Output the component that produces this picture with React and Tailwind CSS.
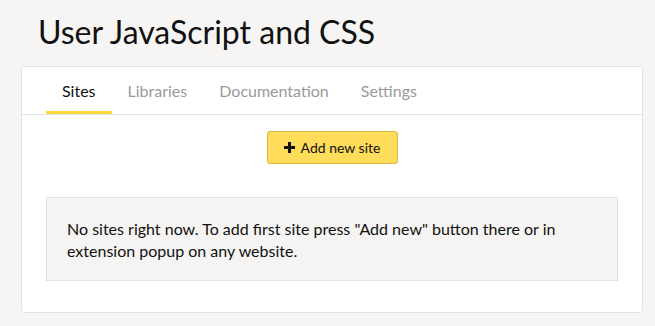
import { useState } from "react";

const tabs = ["Sites", "Libraries", "Documentation", "Settings"];

const PlusIcon = () => (
    <svg width="11" height="11" viewBox="0 0 11 11" className="shrink-0">
        <rect x="4" y="0" width="3" height="11" fill="#111" />
        <rect x="0" y="4" width="11" height="3" fill="#111" />
    </svg>
);

const App = () => {
    const [active, setActive] = useState("Sites");

    return (
        <div className="min-h-screen bg-[#f6f5f3] px-[21px] pt-[12px] pb-[13px] font-['Lato','Liberation_Sans',sans-serif] text-[#111]">
            <h1 className="pl-[17px] text-[32px] leading-[40px] font-normal">User JavaScript and CSS</h1>

            <div className="mt-[14px] w-[622px] rounded-[3px] border border-[#e2e2e2] bg-white">
                <div className="flex border-b border-[#e2e2e2] px-[24px]">
                    {tabs.map((tab) => (
                        <button
                            key={tab}
                            onClick={() => setActive(tab)}
                            className={`px-[16px] pt-[14px] pb-[10px] text-[16px] leading-[20px] border-b-[3px] ${active === tab ? "border-[#ffd83a] text-[#111]" : "border-transparent text-[#9a9a9a]"}`}
                        >
                            {tab}
                        </button>
                    ))}
                </div>

                <div className="px-[24px] pt-[16px] pb-[31px]">
                    <div className="flex justify-center">
                        <button className="flex h-[33px] w-[131px] items-center justify-center gap-[6px] rounded-[3px] border border-[#d8b63e] bg-[#ffdc5a] text-[14px]">
                            <PlusIcon />
                            Add new site
                        </button>
                    </div>

                    <div className="mt-[33px] h-[84px] border border-[#e2e2e2] bg-[#f5f4f2] px-[20px] pt-[20px] text-[16px] leading-[22px]">
                        No sites right now. To add first site press "Add new" button there or in extension popup on any website.
                    </div>
                </div>
            </div>
        </div>
    );
};

export default App;
